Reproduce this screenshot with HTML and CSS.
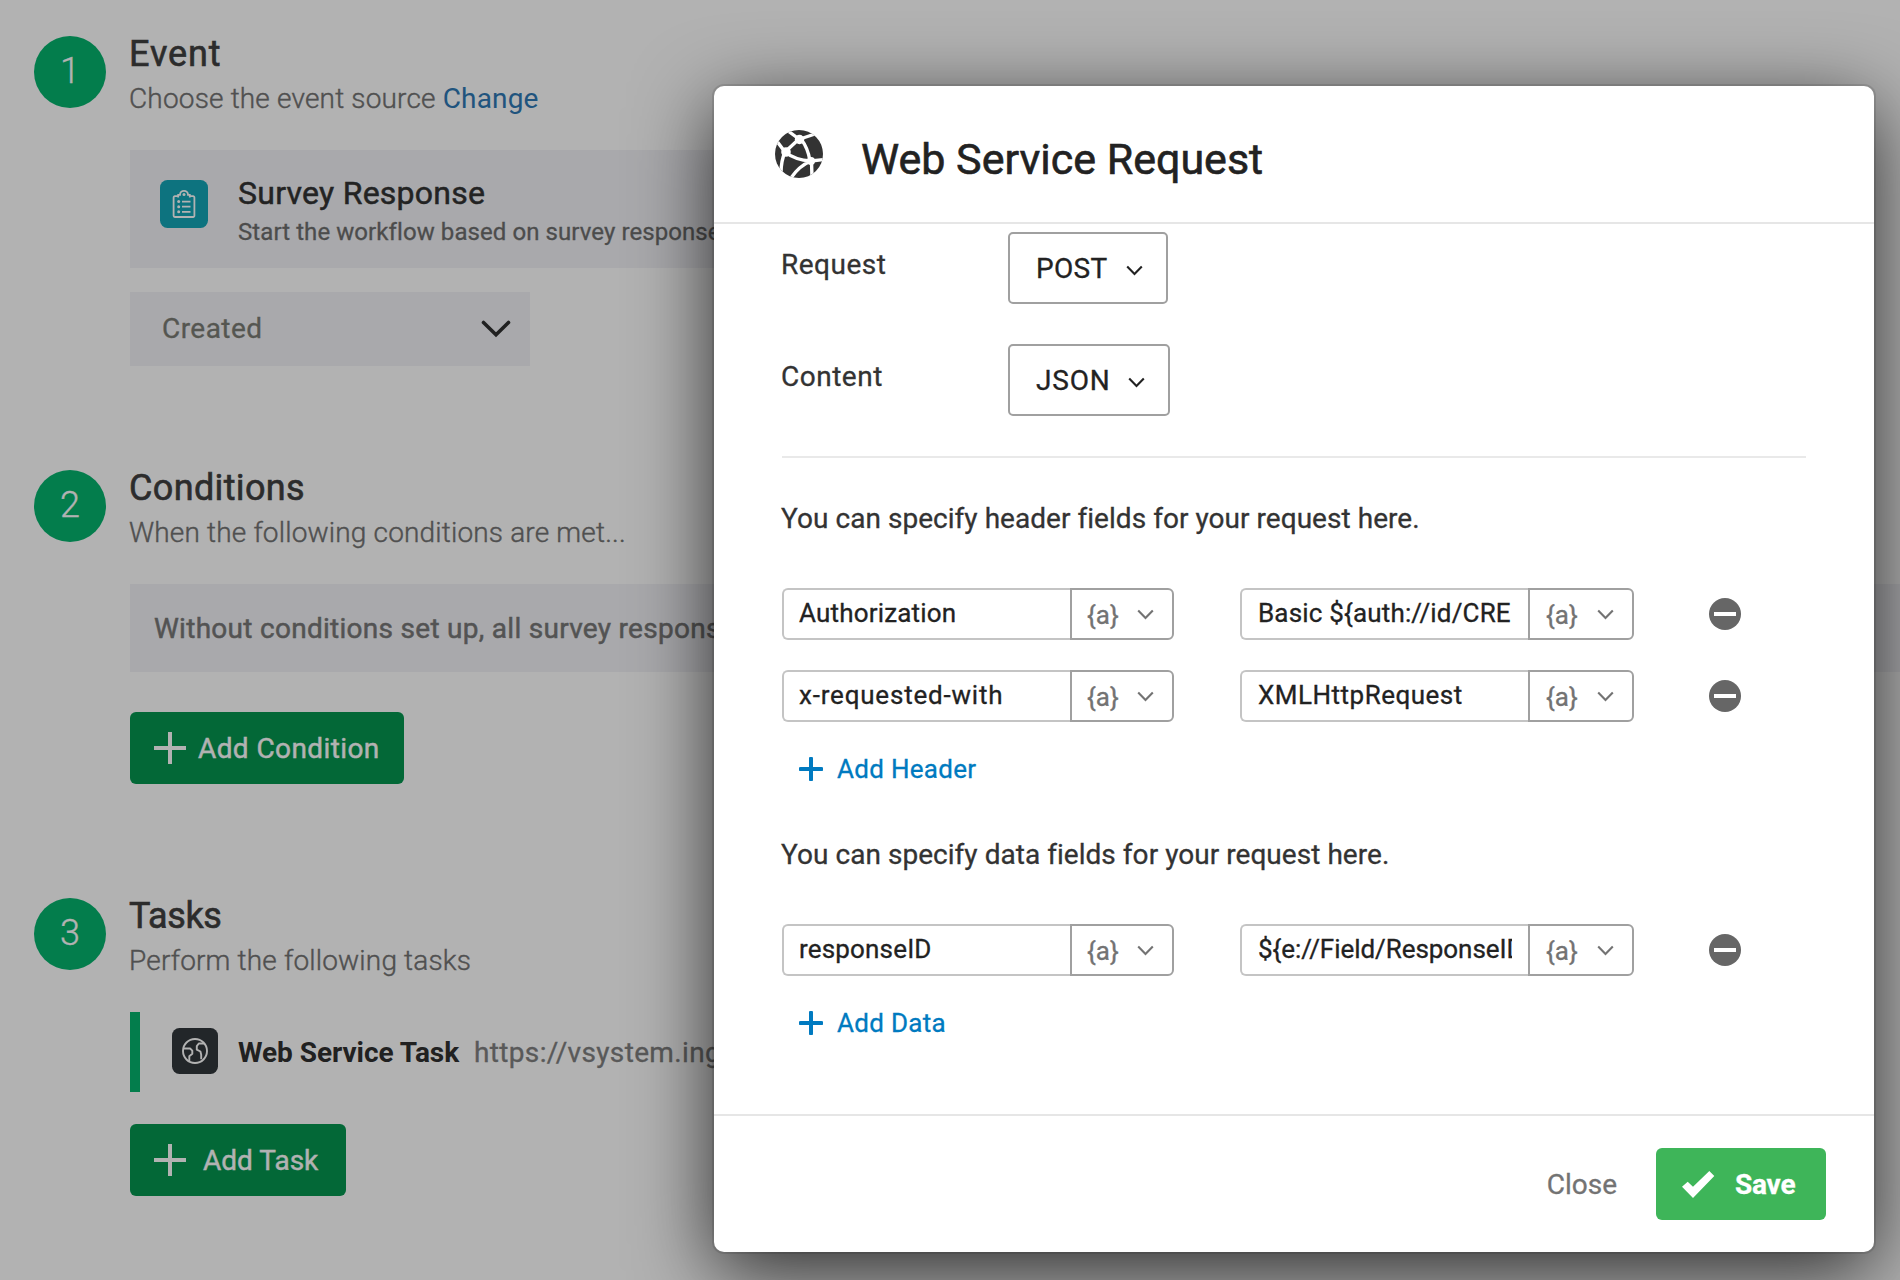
FILE: index.html
```html
<!DOCTYPE html>
<html lang="en">
<head>
<meta charset="utf-8">
<title>Workflow</title>
<link rel="stylesheet" href="styles.css">
</head>
<body>
<svg class="defs" width="0" height="0" aria-hidden="true">
  <symbol id="chevron" viewBox="0 0 17 11"><path d="M1.2 1.5 8.5 9 15.8 1.5" fill="none" stroke="currentColor" stroke-width="2.1"/></symbol>
  <symbol id="plus-thin" viewBox="0 0 32 32"><path d="M16 0v32M0 16h32" stroke="currentColor" stroke-width="4"/></symbol>
  <symbol id="plus" viewBox="0 0 24 24"><path d="M12 1.5v21M1.5 12h21" stroke="currentColor" stroke-width="4" stroke-linecap="round"/></symbol>
  <symbol id="remove" viewBox="0 0 32 32"><circle cx="16" cy="16" r="16" fill="#666"/><path d="M5 16h22" stroke="#fff" stroke-width="4"/></symbol>
</svg>

<main class="workflow">
  <section class="step">
    <div class="step-number">1</div>
    <div class="step-content">
      <h2 class="step-title event">Event</h2>
      <p class="step-sub">Choose the event source <a class="link">Change</a></p>
      <div class="card event-card">
        <svg class="survey-icon" viewBox="0 0 48 48">
          <rect width="48" height="48" rx="7.5" fill="#13a5b6"/>
          <g fill="none" stroke="#fff" stroke-width="1.8">
            <path d="M19 16.2h-4.2a1.2 1.2 0 0 0-1.2 1.2v18.4a1.2 1.2 0 0 0 1.2 1.2h18.4a1.2 1.2 0 0 0 1.2-1.2V17.4a1.2 1.2 0 0 0-1.2-1.2H29"/>
            <path d="M18.2 17.5v-2.7h1.8a4 4 0 0 1 8 0h1.8v2.7"/>
            <path d="M22 21.6h8.5M22 26.700h8.500M22 31.800h8.500"/>
          </g>
          <g fill="#fff"><circle cx="24" cy="14.500" r="1.500"/><circle cx="18.700" cy="21.600" r="1.500"/><circle cx="18.700" cy="26.700" r="1.500"/><circle cx="18.700" cy="31.800" r="1.500"/></g>
        </svg>
        <div class="event-text">
          <h3 class="event-title">Survey Response</h3>
          <p class="event-sub">Start the workflow based on survey responses.</p>
        </div>
      </div>
      <div class="select">
        <span>Created</span>
        <svg width="30" height="18" viewBox="0 0 30 18"><path d="M2.500 2.500 15 14.800 27.500 2.500" fill="none" stroke="#303030" stroke-width="3.600" stroke-linecap="round"/></svg>
      </div>
    </div>
  </section>

  <section class="step">
    <div class="step-number">2</div>
    <div class="step-content">
      <h2 class="step-title">Conditions</h2>
      <p class="step-sub">When the following conditions are met...</p>
      <div class="card conditions-card">Without conditions set up, all survey responses</div>
      <button class="add-button add-condition"><svg width="32" height="32"><use href="#plus-thin"/></svg><span>Add Condition</span></button>
    </div>
  </section>

  <section class="step">
    <div class="step-number">3</div>
    <div class="step-content">
      <h2 class="step-title tasks">Tasks</h2>
      <p class="step-sub">Perform the following tasks</p>
      <div class="task">
        <svg class="task-icon" viewBox="0 0 46 46">
          <rect width="46" height="46" rx="7.500" fill="#32373c"/>
          <g fill="none" stroke="#fff" stroke-width="1.900" stroke-linejoin="round">
            <circle cx="23" cy="23" r="12"/>
            <path d="M11.500 20.500h6.600l2.200 2.100v3.200l-3 2.400v4.800"/>
            <path d="M32 15.500h-5.200l-2 2.600v3.600l3.600 1.800.8 3.200v4.500"/>
          </g>
        </svg>
        <span class="task-name">Web Service Task</span>
        <span class="task-url">https://vsystem.ingest</span>
      </div>
      <button class="add-button add-task"><svg width="32" height="32"><use href="#plus-thin"/></svg><span>Add Task</span></button>
    </div>
  </section>
</main>

<div class="backdrop"></div>

<div class="modal" role="dialog">
  <header class="modal-header">
    <svg width="48" height="48" viewBox="0 0 48 48">
      <clipPath id="globe"><circle cx="24" cy="24" r="24"/></clipPath>
      <g clip-path="url(#globe)">
        <rect width="48" height="48" fill="#333"/>
        <g fill="none" stroke="#fff" stroke-width="3.400">
          <path d="M24 9 13 1M25 9 43 3M24 9 10 22M26 9Q33 18 35 31M10 22 1 10M10 22Q6 31 6 43M10 22Q20 30 36 31M36 31 49 29.500M36 31Q24 36 16 48M36.500 31 37 48"/>
        </g>
        <g fill="#fff"><circle cx="24.500" cy="9.500" r="4.700"/><circle cx="11" cy="22" r="4.800"/><circle cx="36" cy="31" r="4"/></g>
      </g>
    </svg>
    <h1 class="modal-title">Web Service Request</h1>
  </header>

  <div class="modal-body">
    <div class="option">
      <label>Request</label>
      <button class="dropdown post"><span>POST</span><svg width="17" height="11"><use href="#chevron"/></svg></button>
    </div>
    <div class="option">
      <label>Content</label>
      <button class="dropdown json"><span>JSON</span><svg width="17" height="11"><use href="#chevron"/></svg></button>
    </div>
    <hr class="divider">

    <p class="hint">You can specify header fields for your request here.</p>
    <div class="pairs">
      <div class="pair">
        <div class="field"><div class="value">Authorization</div><div class="piped"><span>{a}</span><svg width="17" height="11"><use href="#chevron"/></svg></div></div>
        <div class="field wide"><div class="value">Basic ${auth://id/CRE</div><div class="piped"><span>{a}</span><svg width="17" height="11"><use href="#chevron"/></svg></div></div>
        <svg width="32" height="32"><use href="#remove"/></svg>
      </div>
      <div class="pair">
        <div class="field"><div class="value hyphenated">x-requested-with</div><div class="piped"><span>{a}</span><svg width="17" height="11"><use href="#chevron"/></svg></div></div>
        <div class="field wide"><div class="value camel">XMLHttpRequest</div><div class="piped"><span>{a}</span><svg width="17" height="11"><use href="#chevron"/></svg></div></div>
        <svg width="32" height="32"><use href="#remove"/></svg>
      </div>
    </div>
    <a class="add-link"><svg width="24" height="24"><use href="#plus"/></svg>Add Header</a>

    <p class="hint data-hint">You can specify data fields for your request here.</p>
    <div class="pairs">
      <div class="pair">
        <div class="field"><div class="value">responseID</div><div class="piped"><span>{a}</span><svg width="17" height="11"><use href="#chevron"/></svg></div></div>
        <div class="field wide"><div class="value"><span class="clip">${e://Field/ResponseID}</span></div><div class="piped"><span>{a}</span><svg width="17" height="11"><use href="#chevron"/></svg></div></div>
        <svg width="32" height="32"><use href="#remove"/></svg>
      </div>
    </div>
    <a class="add-link"><svg width="24" height="24"><use href="#plus"/></svg>Add Data</a>
  </div>

  <footer class="modal-footer">
    <a class="close">Close</a>
    <button class="save">
      <svg width="33" height="27" viewBox="0 0 33 27"><path d="M0 15.700 5.700 10.700 11 15.700 27.300 0 32.300 5 11 27z" fill="#fff"/></svg>
      <span>Save</span>
    </button>
  </footer>
</div>
</body>
</html>
```
FILE: styles.css
```css
* { box-sizing: border-box; }

body {
  position: relative;
  width: 1900px;
  height: 1280px;
  margin: 0;
  overflow: hidden;
  background: #fff;
  color: #333;
  font: 400 28px/40px Roboto, "Liberation Sans", sans-serif;
  -webkit-text-stroke: .3px currentColor;
}

h1, h2, h3, p, hr { margin: 0; }
svg { display: block; flex: none; }
.defs { position: absolute; }
button { border: 0; padding: 0; background: none; font: inherit; color: inherit; display: flex; align-items: center; }

/* Workflow */
.workflow {
  display: grid;
  grid-template-rows: 434px 428px 386px;
  padding: 32px 0 0 34px;
}
.step { display: grid; grid-template-columns: 72px 1fr; column-gap: 24px; min-width: 0; }
.step-number {
  width: 72px;
  height: 72px;
  margin-top: 4px;
  border-radius: 50%;
  background: #05b36e;
  color: #fff;
  font-size: 36px;
  font-weight: 300;
  line-height: 70px;
  text-align: center;
}
.step-title { margin-left: -1px; font-size: 36px; font-weight: 400; line-height: 44px; color: #404040; letter-spacing: .35px; -webkit-text-stroke-width: .6px; }
.step-title.event { letter-spacing: .9px; }
.step-title.tasks { letter-spacing: -.4px; }
.step-sub { margin: 1px 0 29px -1px; line-height: 44px; font-weight: 300; color: #737373; letter-spacing: .17px; -webkit-text-stroke-width: .4px; }
.link { color: #2f79b5; font-weight: 400; -webkit-text-stroke-width: 0; }
.card { background: #f2f3f7; }
.event-card { display: flex; width: 1700px; height: 118px; padding: 30px 30px 0; }
.survey-icon { width: 48px; height: 48px; }
.event-text { margin: -7px 0 0 30px; }
.event-title { font-size: 32px; font-weight: 400; line-height: 40px; color: #333; letter-spacing: .25px; -webkit-text-stroke-width: .5px; }
.event-sub { font-size: 24px; line-height: 38px; color: #6e6e6e; letter-spacing: .08px; }
.select {
  display: flex;
  justify-content: space-between;
  align-items: center;
  width: 400px;
  height: 74px;
  margin-top: 24px;
  padding: 0 19px 1px 32px;
  background: #f2f3f7;
  color: #7a7c74;
  letter-spacing: .45px;
}
.conditions-card { height: 88px; padding-left: 24px; line-height: 89px; color: #787878; letter-spacing: .28px; -webkit-text-stroke-width: .5px; }
.add-button { height: 72px; padding: 0 24px; border-radius: 6px; background: #059650; color: #fff; -webkit-text-stroke-width: .4px; }
.add-button span, .dropdown span, .save span { padding-top: 1px; }
.add-condition { width: 274px; margin-top: 40px; gap: 12px; letter-spacing: .4px; }
.add-task { width: 216px; margin-top: 32px; gap: 17px; letter-spacing: 0; }
.task { display: flex; align-items: center; height: 80px; padding-left: 32px; border-left: 10px solid #05b36e; }
.task-icon { width: 46px; height: 46px; margin: 0 20px 2px 0; }
.task-name { width: 236px; padding-top: 1px; font-weight: 700; color: #303030; letter-spacing: -.05px; -webkit-text-stroke-width: 0; }
.task-url { padding-top: 1px; color: #808080; letter-spacing: .35px; }

.backdrop { position: absolute; inset: 0; background: rgba(0, 0, 0, .3); }

/* Dialog */
.modal {
  position: absolute;
  left: 714px;
  top: 86px;
  display: flex;
  flex-direction: column;
  width: 1160px;
  height: 1166px;
  border-radius: 10px;
  background: #fff;
  box-shadow: 0 0 0 2px rgba(0, 0, 0, .1), 0 20px 80px rgba(0, 0, 0, .75);
}
.modal-header { display: flex; align-items: center; gap: 38px; height: 138px; padding: 0 61px; border-bottom: 2px solid #e6e6e6; }
.modal-title { padding-top: 9px; font-size: 43px; font-weight: 400; line-height: 52px; color: #222; -webkit-text-stroke-width: .6px; }
.modal-body { flex: 1; padding: 8px 68px 0; }
.option { display: grid; grid-template-columns: 226px auto; justify-content: start; height: 72px; margin-bottom: 40px; }
.option label { margin-left: -1px; line-height: 66px; letter-spacing: .5px; }
.dropdown { height: 72px; padding: 0 23px 0 26px; border: 2px solid #a0a0a0; border-radius: 5px; color: #222; justify-content: space-between; }
.dropdown svg { margin-top: 4px; }
.post { width: 160px; letter-spacing: .3px; }
.json { width: 162px; letter-spacing: .8px; }
.divider { height: 2px; border: 0; background: #e9e9e9; }
.hint { margin: 41px 0 49px -1px; letter-spacing: .04px; }
.data-hint { margin-top: 46px; }
.pairs { display: flex; flex-direction: column; gap: 30px; }
.pair { display: flex; align-items: center; height: 52px; font-size: 26px; color: #222; letter-spacing: .17px; }
.pair > svg { margin-left: 75px; }
.field { display: flex; width: 392px; height: 52px; }
.field.wide { width: 394px; margin-left: 66px; }
.value { width: 288px; padding: 0 0 2px 15px; border: 2px solid #c4c4c4; border-right: 0; border-radius: 6px 0 0 6px; line-height: 46px; white-space: nowrap; }
.wide .value { padding-left: 16px; }
.clip { display: block; width: 254px; overflow: hidden; letter-spacing: -.05px; }
.hyphenated { letter-spacing: .8px; }
.camel { letter-spacing: .5px; }
.piped { display: flex; align-items: center; justify-content: space-between; flex: 1; padding: 0 18px 0 15px; border: 2px solid #a0a0a0; border-radius: 0 6px 6px 0; color: #737373; }
.piped span { padding-top: 1px; letter-spacing: 0; }
.wide .piped { padding-left: 16px; }
.add-link { display: flex; align-items: center; gap: 14px; margin: 27px 0 0 17px; color: #007ac0; font-size: 26px; letter-spacing: .3px; }
.modal-footer { display: flex; align-items: center; justify-content: flex-end; height: 138px; padding: 0 48px 0 0; border-top: 2px solid #e6e6e6; }
.close { margin-right: 39px; padding-top: 1px; color: #737373; }
.save { width: 170px; height: 72px; padding-left: 26px; gap: 20px; border-radius: 6px; background: #3eb559; color: #fff; font-weight: 700; letter-spacing: -.2px; }
```
